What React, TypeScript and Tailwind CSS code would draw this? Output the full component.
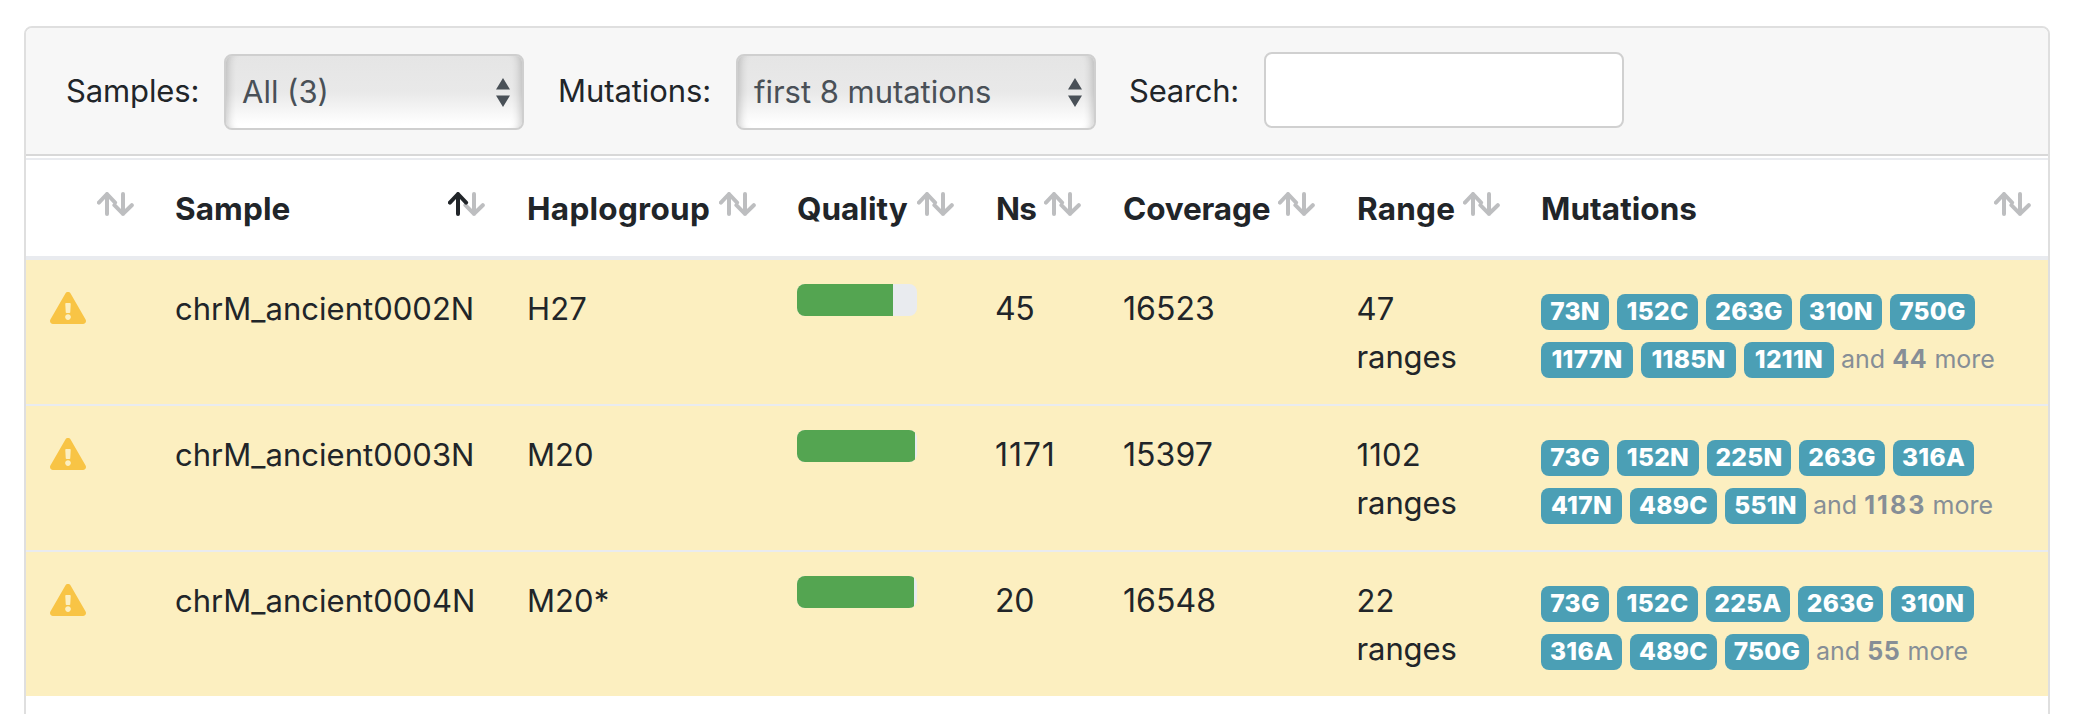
import { FaExclamationTriangle } from "react-icons/fa";

type Badge = [label: string, width: string];

interface SampleRow {
  sample: string;
  haplogroup: string;
  quality: number;
  ns: string;
  nsTracking?: string;
  coverage: string;
  ranges: string;
  badges: [Badge[], Badge[]];
  more: string;
  moreTracking?: string;
}

const rows: SampleRow[] = [
  {
    sample: "chrM_ancient0002N",
    haplogroup: "H27",
    quality: 80,
    ns: "45",
    coverage: "16523",
    ranges: "47",
    badges: [
      [["73N", "w-[68px]"], ["152C", "w-[81px]"], ["263G", "w-[86px]"], ["310N", "w-[82px]"], ["750G", "w-[85px]"]],
      [["1177N", "w-[92px]"], ["1185N", "w-[95px]"], ["1211N", "w-[90px]"]],
    ],
    more: "44",
  },
  {
    sample: "chrM_ancient0003N",
    haplogroup: "M20",
    quality: 98.4,
    ns: "1171",
    nsTracking: "tracking-[0.9px]",
    coverage: "15397",
    ranges: "1102",
    badges: [
      [["73G", "w-[68px]"], ["152N", "w-[82px]"], ["225N", "w-[84px]"], ["263G", "w-[86px]"], ["316A", "w-[81px]"]],
      [["417N", "w-[81px]"], ["489C", "w-[87px]"], ["551N", "w-[81px]"]],
    ],
    more: "1183",
    moreTracking: "tracking-[2.1px] -mr-px",
  },
  {
    sample: "chrM_ancient0004N",
    haplogroup: "M20*",
    quality: 97.6,
    ns: "20",
    coverage: "16548",
    ranges: "22",
    badges: [
      [["73G", "w-[68px]"], ["152C", "w-[81px]"], ["225A", "w-[84px]"], ["263G", "w-[85px]"], ["310N", "w-[83px]"]],
      [["316A", "w-[81px]"], ["489C", "w-[87px]"], ["750G", "w-[84px]"]],
    ],
    more: "55",
  },
];

const columns = [
  { title: "", width: "w-[125px]", style: "" },
  { title: "Sample", width: "w-[351px]", style: "pl-6 tracking-[0.1px]", sorted: true },
  { title: "Haplogroup", width: "w-[271px]", style: "pl-[25px] tracking-[0.28px]" },
  { title: "Quality", width: "w-[198px]", style: "pl-6 tracking-[0px]" },
  { title: "Ns", width: "w-[127px]", style: "pl-[25px] tracking-[-0.8px]" },
  { title: "Coverage", width: "w-[234px]", style: "pl-[25px] tracking-[-0.15px]" },
  { title: "Range", width: "w-[185px]", style: "pl-[25px] tracking-[0.2px]" },
  { title: "Mutations", width: "w-[531px]", style: "pl-6 tracking-[0.05px]" },
];

function SortArrows({ sorted = false }: { sorted?: boolean }) {
  return (
    <svg
      className="absolute top-[32px] right-[17.5px] h-6 w-[37px]"
      viewBox="0 0 37 24"
      fill="none"
      strokeWidth="4"
      strokeLinecap="round"
      strokeLinejoin="round"
    >
      <path d="M26 2v20M17.4 13.2l8.6 8.6 8.8-8.6" stroke="#bdbec0" />
      <path d="M10 22V2M1.9 10.6L10 2l8.1 8.6" stroke={sorted ? "#212529" : "#bdbec0"} />
    </svg>
  );
}

function Select({ value, width, tracking }: { value: string; width: string; tracking: string }) {
  return (
    <button
      type="button"
      className={`mt-1 flex h-[76px] shrink-0 items-center justify-between rounded-lg border-2 border-[#cfcfcf] bg-linear-to-b from-[#e5e5e5] from-0% via-[#e9e9e9] via-50% to-white to-95% pr-[12px] pl-4 text-[#495057] shadow-[inset_11px_0_9px_-9px_rgba(0,0,0,0.2),inset_-11px_0_9px_-9px_rgba(0,0,0,0.2)] ${width}`}
    >
      <span className={tracking}>{value}</span>
      <svg className="h-[29px] w-[14px]" viewBox="0 0 14 29" fill="currentColor">
        <path d="M7 0l7 11.5H0zM7 29l7-11.5H0z" />
      </svg>
    </button>
  );
}

function BadgeLine({ badges, children }: { badges: Badge[]; children?: React.ReactNode }) {
  return (
    <div className="flex h-12 items-center gap-2">
      {badges.map(([label, width]) => (
        <span
          key={label}
          className={`h-9 shrink-0 rounded-lg bg-[#4b9fb5] text-center text-[24.5px] leading-[35px] font-extrabold tracking-[0.3px] text-white ${width}`}
        >
          {label}
        </span>
      ))}
      {children}
    </div>
  );
}

export default function App() {
  return (
    <div className="h-[714px] overflow-hidden bg-white pt-[26px] pl-6 font-['Inter',sans-serif] text-[31px] leading-[48px] text-[#212529]">
      <div className="h-[720px] w-[2026px] rounded-t-lg border-2 border-[#dfdfdf] bg-white">
        <div className="flex h-[128px] items-center rounded-t-md border-b-2 border-[#d8d8d8] bg-[#f7f7f7] pb-0.5 pl-10">
          <label className="w-[158px] shrink-0 pt-0.5 tracking-[-0.12px]">Samples:</label>
          <Select value="All (3)" width="w-[300px]" tracking="tracking-[0px]" />
          <label className="ml-[34px] w-[178px] shrink-0 pt-0.5 tracking-[-0.08px]">Mutations:</label>
          <Select value="first 8 mutations" width="w-[360px]" tracking="tracking-[-0.03px]" />
          <label className="ml-[33px] w-[135px] shrink-0 pt-0.5 tracking-[-0.25px]">Search:</label>
          <input
            type="text"
            aria-label="Search"
            className="h-[76px] w-[360px] rounded-lg border-2 border-[#d0d0d0] bg-white px-6 outline-none"
          />
        </div>

        <table className="mt-0.5 w-[2022px] table-fixed border-separate border-spacing-0 text-left">
          <thead>
            <tr>
              {columns.map((c) => (
                <th
                  key={c.title}
                  className={`relative h-[102px] border-t-2 border-b-4 border-[#e9ebef] pt-0.5 pr-0 pb-0 text-[31.5px] font-bold whitespace-nowrap ${c.width} ${c.style}`}
                >
                  {c.title}
                  <SortArrows sorted={c.sorted} />
                </th>
              ))}
            </tr>
          </thead>
          <tbody className="bg-[#fcefc0] *:not-first:*:border-t-2 *:not-first:*:border-[#e9ebef]">
            {rows.map((r) => (
              <tr key={r.sample} className="align-top">
                <td className="px-6 py-8">
                  <FaExclamationTriangle className="block h-8 w-9 text-[#f8c445]" />
                </td>
                <td className="px-6 pt-[25px] pb-[23px] tracking-[0.03px]">{r.sample}</td>
                <td className="pt-[25px] pr-0 pb-[23px] pl-[25px] tracking-[0.1px]">{r.haplogroup}</td>
                <td className="px-6 py-6">
                  <div className="h-8 w-[120px] overflow-hidden rounded-lg bg-[#e9ebef]">
                    <div className="h-full bg-[#54a551]" style={{ width: `${r.quality}%` }} />
                  </div>
                </td>
                <td className={`pt-[25px] pr-0 pb-[23px] pl-6 text-[32px] ${r.nsTracking ?? "tracking-[-0.3px]"}`}>
                  {r.ns}
                </td>
                <td className="pt-[25px] pr-0 pb-[23px] pl-[25px] text-[32px] tracking-[0.05px]">{r.coverage}</td>
                <td className="pt-[25px] pr-0 pb-[22px] pl-[24.5px]">
                  <span className="tracking-[0.2px]">{r.ranges}</span>
                  <br />
                  <span className="tracking-[-0.1px]">ranges</span>
                </td>
                <td className="pt-[28px] pr-0 pb-5 pl-6 whitespace-nowrap">
                  <BadgeLine badges={r.badges[0]} />
                  <BadgeLine badges={r.badges[1]}>
                    <span className="-mt-0.5 -ml-px text-[25px] text-[#868e96]">
                      and <b className={`font-bold ${r.moreTracking ?? "tracking-[0.7px]"}`}>{r.more}</b> more
                    </span>
                  </BadgeLine>
                </td>
              </tr>
            ))}
          </tbody>
        </table>
      </div>
    </div>
  );
}
